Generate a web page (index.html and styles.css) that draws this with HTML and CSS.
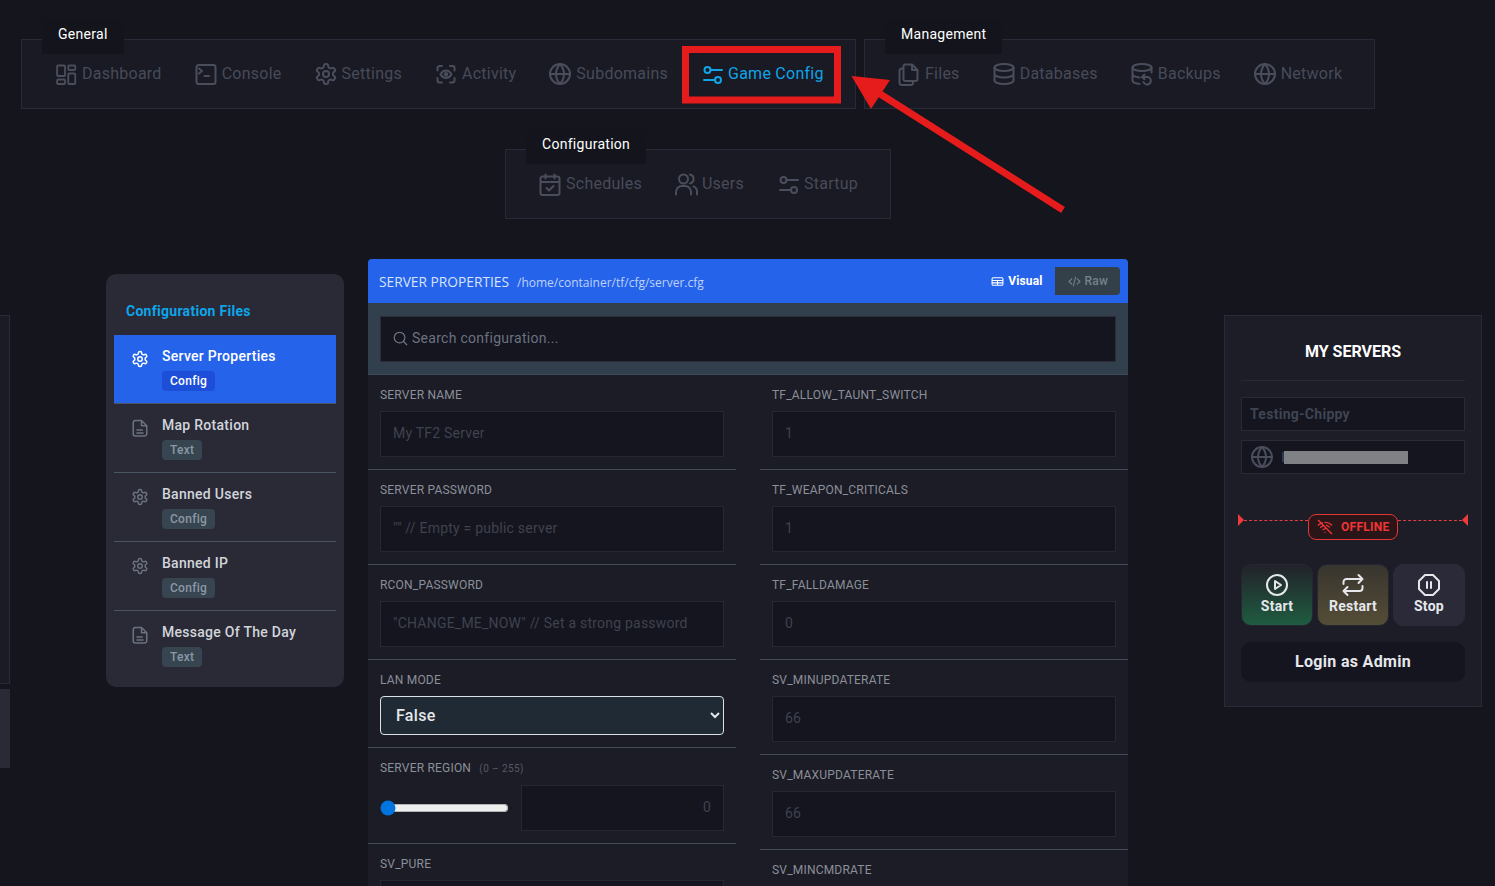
FILE: index.html
```html
<!DOCTYPE html>
<html lang="en">
<head>
<meta charset="utf-8">
<title>Game Config</title>
<link rel="stylesheet" href="styles.css">
</head>
<body>
<svg width="0" height="0" class="defs">
  <defs>
    <symbol id="i-dash" viewBox="0 0 24 24"><path transform="translate(.8 0) scale(.93 1)" d="M3.500 3.500h6.500a1 1 0 0 1 1 1v8.500a1 1 0 0 1-1 1H3.500a1 1 0 0 1-1-1V4.500a1 1 0 0 1 1-1zM3.500 17.500h6.500a1 1 0 0 1 1 1V21a1 1 0 0 1-1 1H3.500a1 1 0 0 1-1-1v-2.500a1 1 0 0 1 1-1zM15.500 11.500H21a1 1 0 0 1 1 1V21a1 1 0 0 1-1 1h-5.500a1 1 0 0 1-1-1v-8.500a1 1 0 0 1 1-1zM15.500 3.500H21a1 1 0 0 1 1 1V7a1 1 0 0 1-1 1h-5.500a1 1 0 0 1-1-1V4.500a1 1 0 0 1 1-1z"/></symbol>
    <symbol id="i-term" viewBox="0 0 24 24"><path d="M5 6.500l3 2.500-3 2.500M10.500 14h4.500M4.500 3h15a2 2 0 0 1 2 2v15a2 2 0 0 1-2 2h-15a2 2 0 0 1-2-2V5a2 2 0 0 1 2-2z"/></symbol>
    <symbol id="i-gear" viewBox="0 0 24 24"><path d="M12.220 2h-.44a2 2 0 0 0-2 2v.18a2 2 0 0 1-1 1.730l-.43.25a2 2 0 0 1-2 0l-.15-.08a2 2 0 0 0-2.730.73l-.22.38a2 2 0 0 0 .73 2.730l.15.1a2 2 0 0 1 1 1.720v.51a2 2 0 0 1-1 1.740l-.15.09a2 2 0 0 0-.73 2.730l.22.38a2 2 0 0 0 2.730.73l.15-.08a2 2 0 0 1 2 0l.43.25a2 2 0 0 1 1 1.730V20a2 2 0 0 0 2 2h.44a2 2 0 0 0 2-2v-.18a2 2 0 0 1 1-1.730l.43-.25a2 2 0 0 1 2 0l.15.08a2 2 0 0 0 2.730-.73l.22-.39a2 2 0 0 0-.73-2.730l-.15-.08a2 2 0 0 1-1-1.740v-.5a2 2 0 0 1 1-1.740l.15-.09a2 2 0 0 0 .73-2.730l-.22-.38a2 2 0 0 0-2.730-.73l-.15.08a2 2 0 0 1-2 0l-.43-.25a2 2 0 0 1-1-1.730V4a2 2 0 0 0-2-2z"/><circle cx="12" cy="12" r="3"/></symbol>
    <symbol id="i-scan" viewBox="0 0 24 24"><path d="M3.500 8.500V6a2 2 0 0 1 2-2H8M3.500 16v2.500a2 2 0 0 0 2 2H8M16 4h2.500a2 2 0 0 1 2 2v2.500M16 20.500h2.500a2 2 0 0 0 2-2V16"/><circle cx="12" cy="12.300" r="1.200"/><path d="M6.500 12.300c1.500-2.600 3.300-3.800 5.500-3.800s4 1.200 5.500 3.800c-1.500 2.600-3.300 3.800-5.500 3.800s-4-1.200-5.500-3.800z"/></symbol>
    <symbol id="i-globe" viewBox="0 0 24 24"><circle cx="12" cy="12" r="10"/><path d="M2 12h20M12 2c-5.300 6-5.300 14 0 20M12 2c5.300 6 5.300 14 0 20"/></symbol>
    <symbol id="i-sliders" viewBox="0 0 24 24"><circle cx="7.500" cy="8" r="3"/><path d="M10.500 8H22M4 18h10.500"/><circle cx="18" cy="18" r="3"/></symbol>
    <symbol id="i-files" viewBox="0 0 24 24"><path d="M8.500 2.500h6.500l5.500 5.500v9a2 2 0 0 1-2 2h-10a2 2 0 0 1-2-2v-12.500a2 2 0 0 1 2-2zM15 2.500V8h5.500M6.500 6.500H5a2.500 2.500 0 0 0-2.500 2.500v11.500A2.500 2.500 0 0 0 5 23h8.500a2.500 2.500 0 0 0 2.500-2.500V19"/></symbol>
    <symbol id="i-db" viewBox="0 0 24 24"><ellipse cx="12" cy="5.500" rx="9.500" ry="3.500"/><path d="M2.500 5.500v13c0 1.900 4.200 3.500 9.500 3.500s9.500-1.600 9.500-3.500v-13M2.500 12c0 1.900 4.200 3.500 9.500 3.500s9.500-1.600 9.500-3.500"/></symbol>
    <symbol id="i-backup" viewBox="0 0 24 24"><ellipse cx="12" cy="5.500" rx="9.500" ry="3.500"/><path d="M2.500 5.500v13c0 1.700 3 3 7 3.400M21.500 5.500v5M2.500 12c0 1.700 3 3 7 3.400M14.500 12.500l-2.500 2.500 2.500 2.200M12.500 15h5.500a3.800 3.800 0 1 1-4.500 5"/></symbol>
    <symbol id="i-cal" viewBox="0 0 24 24"><path d="M4.500 4.500h15a2 2 0 0 1 2 2V21a2 2 0 0 1-2 2h-15a2 2 0 0 1-2-2V6.500a2 2 0 0 1 2-2zM2.500 10h19M7.500 2.500v4M16.500 2.500v4M8.500 16l2.500 2.500 4.500-4.500"/></symbol>
    <symbol id="i-users" viewBox="0 0 24 24"><circle cx="9.500" cy="7" r="4.500"/><path d="M2 22.500v-2.500a6 6 0 0 1 6-6h3a6 6 0 0 1 6 6v2.500M16 2.600a4.500 4.500 0 0 1 0 8.800M19.500 14.300a6 6 0 0 1 3.500 5.700v2.500"/></symbol>
    <symbol id="i-file" viewBox="0 0 24 24"><path d="M6 2h8l7 7v11a2.500 2.500 0 0 1-2.500 2.500h-13A2.500 2.500 0 0 1 3 20V5a3 3 0 0 1 3-3zM14 2v7h7M8 14.500h7M8 18.500h8"/></symbol>
    <symbol id="i-search" viewBox="0 0 24 24"><circle cx="10.500" cy="10.500" r="8.500"/><path d="M22 22l-5.500-5.500"/></symbol>
    <symbol id="i-table" viewBox="0 0 24 24"><path d="M4 5h16a2 2 0 0 1 2 2v10a2 2 0 0 1-2 2H4a2 2 0 0 1-2-2V7a2 2 0 0 1 2-2zM2 10h20M2 14.500h20M12 10v9"/></symbol>
    <symbol id="i-code" viewBox="0 0 24 24"><path d="M7 7l-5 5 5 5M17 7l5 5-5 5M14 4l-4 16"/></symbol>
    <symbol id="i-wifioff" viewBox="0 0 24 24"><path d="M2 2l20 20M2 9c2-1.700 4-2.800 6-3.300M12 5c4 0 7.500 1.500 10 4M5.500 12.500c1.200-1 2.600-1.800 4-2.200M14 9.500c1.800.5 3.300 1.500 4.500 2.700M9 16c1-.8 2-1.200 3-1.200M12 20h.01"/></symbol>
    <symbol id="i-play" viewBox="0 0 24 24"><circle cx="12" cy="12" r="10"/><path d="M10 8l6 4-6 4z"/></symbol>
    <symbol id="i-repeat" viewBox="0 0 24 24"><path d="M2.500 11V9a3 3 0 0 1 3-3h16M17.500 2l4 4-4 4M21.500 13v2a3 3 0 0 1-3 3h-16M6.500 22l-4-4 4-4"/></symbol>
    <symbol id="i-stop" viewBox="0 0 24 24"><path d="M8 2h8l6 6v8l-6 6H8l-6-6V8zM10 9v6M14 9v6"/></symbol>
  </defs>
</svg>

<div class="page">
  <nav class="nav">
    <div class="nav-row">
      <div class="group group-general">
        <span class="legend">General</span>
        <a class="item"><svg class="ico"><use href="#i-dash"/></svg>Dashboard</a>
        <a class="item"><svg class="ico"><use href="#i-term"/></svg>Console</a>
        <a class="item"><svg class="ico"><use href="#i-gear"/></svg>Settings</a>
        <a class="item"><svg class="ico"><use href="#i-scan"/></svg>Activity</a>
        <a class="item"><svg class="ico"><use href="#i-globe"/></svg>Subdomains</a>
        <a class="item active"><svg class="ico"><use href="#i-sliders"/></svg>Game Config</a>
      </div>
      <div class="group group-manage">
        <span class="legend">Management</span>
        <a class="item"><svg class="ico"><use href="#i-files"/></svg>Files</a>
        <a class="item"><svg class="ico"><use href="#i-db"/></svg>Databases</a>
        <a class="item"><svg class="ico"><use href="#i-backup"/></svg>Backups</a>
        <a class="item"><svg class="ico"><use href="#i-globe"/></svg>Network</a>
      </div>
    </div>
    <div class="nav-row nav-row-center">
      <div class="group">
        <span class="legend">Configuration</span>
        <a class="item"><svg class="ico"><use href="#i-cal"/></svg>Schedules</a>
        <a class="item"><svg class="ico"><use href="#i-users"/></svg>Users</a>
        <a class="item"><svg class="ico"><use href="#i-sliders"/></svg>Startup</a>
      </div>
    </div>
  </nav>

  <main class="main">
    <div class="stray">
      <div class="stray-box"></div>
      <div class="stray-block"></div>
    </div>

    <aside class="files">
      <h2 class="files-title">Configuration Files</h2>
      <div class="file selected">
        <svg class="file-ico"><use href="#i-gear"/></svg>
        <div class="file-body"><div class="file-name">Server Properties</div><span class="badge">Config</span></div>
      </div>
      <div class="file">
        <svg class="file-ico"><use href="#i-file"/></svg>
        <div class="file-body"><div class="file-name">Map Rotation</div><span class="badge">Text</span></div>
      </div>
      <div class="file">
        <svg class="file-ico"><use href="#i-gear"/></svg>
        <div class="file-body"><div class="file-name">Banned Users</div><span class="badge">Config</span></div>
      </div>
      <div class="file">
        <svg class="file-ico"><use href="#i-gear"/></svg>
        <div class="file-body"><div class="file-name">Banned IP</div><span class="badge">Config</span></div>
      </div>
      <div class="file last">
        <svg class="file-ico"><use href="#i-file"/></svg>
        <div class="file-body"><div class="file-name">Message Of The Day</div><span class="badge">Text</span></div>
      </div>
    </aside>

    <section class="editor">
      <header class="editor-head">
        <span class="editor-title">SERVER PROPERTIES</span>
        <span class="editor-path">/home/container/tf/cfg/server.cfg</span>
        <div class="modes">
          <span class="mode mode-on"><svg class="mode-ico"><use href="#i-table"/></svg>Visual</span>
          <span class="mode mode-off"><svg class="mode-ico"><use href="#i-code"/></svg>Raw</span>
        </div>
      </header>
      <div class="search-band">
        <div class="search">
          <svg class="search-ico"><use href="#i-search"/></svg>
          <input class="search-input" type="text" placeholder="Search configuration...">
        </div>
      </div>
      <div class="fields">
        <div class="col">
          <div class="field"><label class="label">SERVER NAME</label><input class="input" type="text" value="My TF2 Server"></div>
          <div class="field"><label class="label">SERVER PASSWORD</label><input class="input" type="text" value="&quot;&quot; // Empty = public server"></div>
          <div class="field"><label class="label">RCON_PASSWORD</label><input class="input" type="text" value="&quot;CHANGE_ME_NOW&quot; // Set a strong password"></div>
          <div class="field field-select"><label class="label">LAN MODE</label><select class="select"><option>False</option><option>True</option></select></div>
          <div class="field field-range"><label class="label">SERVER REGION <span class="range-hint">(0 – 255)</span></label>
            <div class="range-row"><input class="range" type="range" min="0" max="255" value="0"><input class="input input-num" type="text" value="0"></div>
          </div>
          <div class="field"><label class="label">SV_PURE</label><input class="input" type="text" value=""></div>
        </div>
        <div class="col">
          <div class="field"><label class="label">TF_ALLOW_TAUNT_SWITCH</label><input class="input" type="text" value="1"></div>
          <div class="field"><label class="label">TF_WEAPON_CRITICALS</label><input class="input" type="text" value="1"></div>
          <div class="field"><label class="label">TF_FALLDAMAGE</label><input class="input" type="text" value="0"></div>
          <div class="field"><label class="label">SV_MINUPDATERATE</label><input class="input" type="text" value="66"></div>
          <div class="field"><label class="label">SV_MAXUPDATERATE</label><input class="input" type="text" value="66"></div>
          <div class="field"><label class="label">SV_MINCMDRATE</label><input class="input" type="text" value=""></div>
        </div>
      </div>
    </section>

    <aside class="servers">
      <h2 class="servers-title">MY SERVERS</h2>
      <div class="srv-box srv-name">Testing-Chippy</div>
      <div class="srv-box srv-ip"><svg class="srv-globe"><use href="#i-globe"/></svg><span class="ip-sliver"></span><span class="redact"></span></div>
      <div class="status">
        <span class="tri tri-l"></span>
        <span class="dash"></span>
        <span class="offline"><svg class="off-ico"><use href="#i-wifioff"/></svg>OFFLINE</span>
        <span class="dash"></span>
        <span class="tri tri-r"></span>
      </div>
      <div class="actions">
        <button class="act act-start"><svg class="act-ico"><use href="#i-play"/></svg>Start</button>
        <button class="act act-restart"><svg class="act-ico"><use href="#i-repeat"/></svg>Restart</button>
        <button class="act act-stop"><svg class="act-ico"><use href="#i-stop"/></svg>Stop</button>
      </div>
      <button class="login">Login as Admin</button>
    </aside>
  </main>

  <svg class="annot" viewBox="0 0 1495 886" width="1495" height="886">
    <rect class="annot-box" x="685.500" y="49.500" width="152" height="50.500"/>
    <path class="annot-line" d="M877 92L1063 210"/>
    <path class="annot-head" d="M851.500 76L890 80L871 109z"/>
  </svg>
</div>
</body>
</html>
```
FILE: styles.css
```css
* { box-sizing: border-box; }
html, body { margin: 0; height: 886px; overflow: hidden; }
body { background: #14151d; color: #d1d5db; font-family: Roboto, "Liberation Sans", sans-serif; font-size: 14px; letter-spacing: .02em; }
.defs { position: absolute; }
symbol path, symbol circle, symbol ellipse { fill: none; stroke: currentColor; stroke-width: 2; stroke-linecap: round; stroke-linejoin: round; }
.page { position: relative; width: 1495px; height: 886px; overflow: hidden; }

/* nav */
.nav { padding: 39px 0 0 21px; width: 1375px; display: flex; flex-direction: column; gap: 40px; }
.nav-row { display: flex; gap: 8px; }
.nav-row-center { justify-content: center; }
.group { position: relative; display: flex; align-items: center; gap: 32px; height: 70px; padding: 0 32px; background: #191a23; border: 1px solid #292a37; }
.group-general { width: 835px; }
.group-manage { width: 511px; }
.legend { position: absolute; top: -21px; left: 20px; height: 35px; padding: 6px 16px 0; background: #14151c; color: #fff; font-size: 14px; line-height: 18px; }
.item { display: flex; align-items: center; gap: 4px; color: #474b59; font-size: 16px; letter-spacing: .25px; white-space: nowrap; line-height: 24px; }
.ico { width: 24px; height: 24px; flex: none; color: #4a4e5c; }
.item.active { color: #0ea5e9; }
.item.active .ico { color: #0ea5e9; }

/* main */
.main { display: flex; align-items: flex-start; margin-top: 40px; }
.stray { width: 10px; margin-top: 56px; flex: none; }
.stray-box { height: 369px; background: #1a1b24; border: 1px solid #292a37; border-left: 0; }
.stray-block { height: 79px; margin-top: 5px; background: #2a2a36; }

.files { flex: none; width: 238px; margin: 15px 0 0 96px; padding: 0 8px 8px; background: #2a2a36; border-radius: 10px; }
.files-title { margin: 0; padding: 29px 12px 16px; font-size: 14px; font-weight: 700; line-height: 16px; color: #0ea5e9; }
.file { display: flex; height: 69px; padding: 13px 0 0 17px; border-bottom: 1px solid #4b5563; }
.file.last { border-bottom: 0; height: 68px; }
.file.selected { background: #2563eb; }
.file-ico { flex: none; width: 18px; height: 18px; margin: 2px 13px 0 0; color: #6b7280; }
.selected .file-ico { color: #fff; }
.file-name { font-size: 14px; font-weight: 500; line-height: 16px; color: #d1d5db; }
.selected .file-name { color: #fff; }
.badge { display: inline-block; height: 20px; margin-top: 7px; padding: 0 8px; border-radius: 4px; background: #374550; color: #8b98a5; font-size: 12px; font-weight: 500; line-height: 20px; }
.selected .badge { background: #1d4ed8; color: #fff; }

/* editor */
.editor { flex: none; width: 760px; margin-left: 24px; background: #1b1c26; border-radius: 4px 4px 0 0; overflow: hidden; }
.editor-head { display: flex; align-items: center; height: 44px; padding: 0 8px 0 11px; background: #2563eb; }
.editor-title { font-family: "Open Sans", Roboto, sans-serif; font-size: 13.750px; letter-spacing: 0; color: #d7e3fb; }
.editor-path { margin: 2px 0 0 8px; font-family: "Open Sans", Roboto, sans-serif; font-size: 12px; letter-spacing: 0; color: #bfd2f8; }
.modes { display: flex; margin-left: auto; height: 28px; }
.mode { display: flex; align-items: center; gap: 4px; padding: 0 12px; font-size: 12px; letter-spacing: .15px; }
.mode-on { color: #fff; font-weight: 700; border-radius: 4px 0 0 4px; }
.mode-off { padding-left: 13px; background: #344049; color: #77808a; border-radius: 0 4px 4px 0; font-weight: 500; }
.mode-ico { width: 13px; height: 13px; flex: none; }

.search-band { height: 72px; padding: 13px 12px 0; background: #323f4c; border-bottom: 1px solid #3d4a58; }
.search { position: relative; height: 46px; }
.search-ico { position: absolute; left: 13px; top: 15px; width: 15px; height: 15px; color: #6b7280; }
.search-input { width: 100%; height: 46px; padding: 0 12px 2px 31px; background: #14151e; border: 1px solid #2b2e3a; color: #d1d5db; font: 14px Roboto, sans-serif; letter-spacing: .02em; outline: 0; }
.search-input::placeholder { color: #6b7280; opacity: 1; }

.fields { display: grid; grid-template-columns: 368px 368px; gap: 24px; }
.field { height: 95px; padding: 12px 12px 0; border-bottom: 1px solid #434a57; }
.field-select { height: 88px; }
.field-range { height: 96px; }
.label { display: block; height: 16px; margin-bottom: 8px; font-size: 12px; line-height: 16px; letter-spacing: .2px; color: #8b8f99; }
.input { display: block; width: 100%; height: 46px; padding: 0 12px 2px; background: #14151e; border: 1px solid #262733; color: #3f4250; font: 14px Roboto, sans-serif; letter-spacing: .22px; outline: 0; }
.select { display: block; width: 100%; height: 39px; padding-left: 11px; background-color: #1f2a35; border: 1px solid #dde1e6; border-radius: 4px; color: #e5e7eb; font: 500 16px Roboto, sans-serif; letter-spacing: .02em; color-scheme: dark; outline: 0; }
.field-range .label { margin-bottom: 9px; }
.range-hint { margin-left: 5px; font-size: 10px; color: #555966; letter-spacing: .4px; }
.range-row { display: flex; align-items: center; gap: 12px; }
.range { flex: none; width: 129px; margin: 0; accent-color: #0075e0; }
.input-num { flex: 1; min-width: 0; width: auto; text-align: right; padding-right: 12px; }

/* servers */
.servers { flex: none; width: 258px; margin: 56px 0 0 96px; padding: 26px 16px 24px; background: #1c1d27; border: 1px solid #292a37; }
.servers-title { margin: 0; padding-bottom: 18px; text-align: center; font-size: 16px; font-weight: 700; line-height: 20px; letter-spacing: 0; color: #fff; border-bottom: 1px solid #292a37; }
.srv-box { display: flex; align-items: center; height: 34px; background: #14151e; border: 1px solid #292a37; }
.srv-name { margin-top: 16px; padding-left: 8px; color: #3f4453; font-size: 14px; font-weight: 700; }
.srv-ip { margin-top: 9px; padding-left: 8px; }
.srv-globe { width: 24px; height: 24px; flex: none; color: #4a4e5c; }
.ip-sliver { width: 2px; height: 10px; margin-left: 8px; background: #2b3a55; }
.redact { width: 124px; height: 13px; background: #7f8184; }
.status { display: flex; align-items: flex-start; height: 26px; margin: 40px -3px 0; }
.tri { flex: none; width: 0; height: 0; margin-top: 0; border-top: 6px solid transparent; border-bottom: 6px solid transparent; }
.tri-l { border-left: 6px solid #ef3b3b; }
.tri-r { border-right: 6px solid #ef3b3b; }
.dash { flex: 1; margin-top: 5.500px; border-top: 1px dashed #e53e3e; }
.offline { display: flex; align-items: center; gap: 8px; flex: none; width: 90px; height: 26px; padding-left: 8px; background: #2a1518; border: 1px solid #e53535; border-radius: 8px; color: #ef3535; font-size: 12px; font-weight: 700; }
.off-ico { width: 16px; height: 16px; flex: none; }
.actions { display: grid; grid-template-columns: repeat(3, 72px); gap: 4px; margin-top: 24px; }
.act { display: flex; flex-direction: column; align-items: center; gap: 1px; height: 62px; padding: 8px 0 0; border: 1px solid #252632; border-radius: 10px; color: #e5e7eb; font: 700 14px Roboto, sans-serif; letter-spacing: .02em; line-height: 16px; }
.act-ico { width: 24px; height: 24px; flex: none; }
.act-start { background: linear-gradient(#22222a, #1f5c40); }
.act-restart { background: linear-gradient(#38352f, #544d36); }
.act-stop { background: #2a2a38; border-color: #2a2a38; }
.login { display: block; width: 100%; height: 40px; margin-top: 16px; padding: 0 0 2px; background: #14151e; border: 0; border-radius: 10px; color: #e5e7eb; font: 700 16px Roboto, sans-serif; letter-spacing: .02em; }

/* annotation */
.annot { position: absolute; left: 0; top: 0; pointer-events: none; }
.annot-box { fill: none; stroke: #e61c1c; stroke-width: 7; }
.annot-line { fill: none; stroke: #e61c1c; stroke-width: 7; }
.annot-head { fill: #e61c1c; }
```
